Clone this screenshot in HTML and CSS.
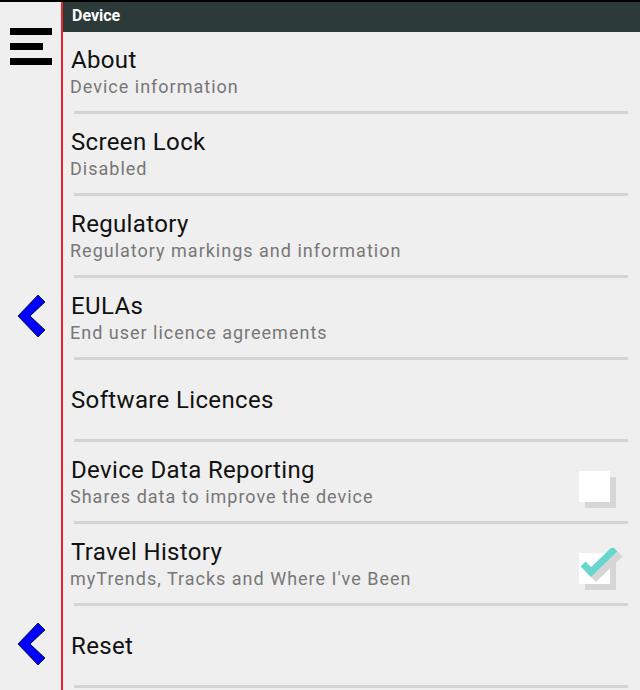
FILE: index.html
```html
<!DOCTYPE html>
<html lang="en">
<head>
<meta charset="UTF-8" />
<meta name="viewport" content="width=device-width, initial-scale=1.0" />
<title>Device</title>
<link rel="stylesheet" href="styles.css">
</head>
<body>
<div class="screen">
  <div class="side">
    <div class="menu">
      <span class="bar"></span>
      <span class="bar short"></span>
      <span class="bar"></span>
    </div>
    <svg class="back back_eula" width="32" height="44" viewBox="0 0 32 44">
      <polygon points="2,21 22,0 29,7 14,21 29,35 22,42" fill="#0000ff" stroke="#000" stroke-width="0.8"/>
    </svg>
    <svg class="back back_reset" width="32" height="44" viewBox="0 0 32 44">
      <polygon points="2,21 22,0 29,7 14,21 29,35 22,42" fill="#0000ff" stroke="#000" stroke-width="0.8"/>
    </svg>
  </div>

  <div class="main">
    <div class="header">Device</div>
    <ul class="list">
      <li class="item">
        <div class="text">
          <div class="title">About</div>
          <div class="sub">Device information</div>
        </div>
      </li>
      <li class="item">
        <div class="text">
          <div class="title">Screen Lock</div>
          <div class="sub">Disabled</div>
        </div>
      </li>
      <li class="item">
        <div class="text">
          <div class="title">Regulatory</div>
          <div class="sub">Regulatory markings and information</div>
        </div>
      </li>
      <li class="item">
        <div class="text">
          <div class="title">EULAs</div>
          <div class="sub">End user licence agreements</div>
        </div>
      </li>
      <li class="item">
        <div class="text">
          <div class="title">Software Licences</div>
        </div>
      </li>
      <li class="item">
        <div class="text">
          <div class="title">Device Data Reporting</div>
          <div class="sub">Shares data to improve the device</div>
        </div>
        <div class="check"></div>
      </li>
      <li class="item">
        <div class="text">
          <div class="title">Travel History</div>
          <div class="sub">myTrends, Tracks and Where I've Been</div>
        </div>
        <div class="check">
          <svg class="tick" width="50" height="40" viewBox="0 0 50 40">
            <polyline points="11,21 19,29 43,6" fill="none" stroke="#d6d6d6" stroke-width="7"/>
            <polyline points="6,16 14,24 38,1" fill="none" stroke="#68d6cf" stroke-width="7"/>
          </svg>
        </div>
      </li>
      <li class="item">
        <div class="text">
          <div class="title">Reset</div>
        </div>
      </li>
    </ul>
  </div>
</div>
</body>
</html>
```

FILE: styles.css
```css
body {
margin: 0;
background: #efefef;
border-top: 2px solid #000;
font-family: Roboto, "Noto Sans", sans-serif;
}

.screen {
display: flex;
height: 688px;
overflow: hidden;
}

/* left strip with menu and back arrows */
.side {
width: 61px;
border-right: 2px solid #e8262a;
display: grid;
grid-template-rows: 30px repeat(8, 82px);
}

.menu {
grid-row: 1 / 3;
align-self: start;
margin: 26px 0 0 10px;
display: flex;
flex-direction: column;
gap: 8px;
}

.bar {
display: block;
width: 42px;
height: 7px;
background: #000;
}

.bar.short {
width: 33px;
}

.back {
align-self: start;
margin: 17px 0 0 16px;
}

.back_eula {
grid-row: 5;
}

.back_reset {
grid-row: 9;
}

.main {
flex: 1;
}

.header {
height: 30px;
line-height: 28px;
background: #2c3a3a;
color: #fff;
font-weight: bold;
font-size: 16px;
padding-left: 9px;
}

.list {
list-style: none;
margin: 0;
padding: 0;
}

.item {
height: 79px;
margin-bottom: 3px;
display: flex;
align-items: center;
position: relative;
}

/* divider under each row */
.item::after {
content: "";
position: absolute;
left: 11px;
right: 12px;
bottom: -3px;
height: 3px;
background: #d4d4d4;
}

.text {
flex: 1;
padding-left: 7px;
}

.title {
font-size: 24px;
line-height: 28px;
letter-spacing: 0.35px;
color: #111;
padding-left: 1px;
}

.sub {
margin-top: 2px;
font-size: 18px;
line-height: 22px;
letter-spacing: 1px;
color: #777;
}

.check {
position: relative;
width: 31px;
height: 31px;
margin: 10px 30px 0 0;
background: #fff;
box-shadow: 6px 6px 0 #d6d6d6;
}

.tick {
position: absolute;
left: -2px;
top: -5px;
}
```
